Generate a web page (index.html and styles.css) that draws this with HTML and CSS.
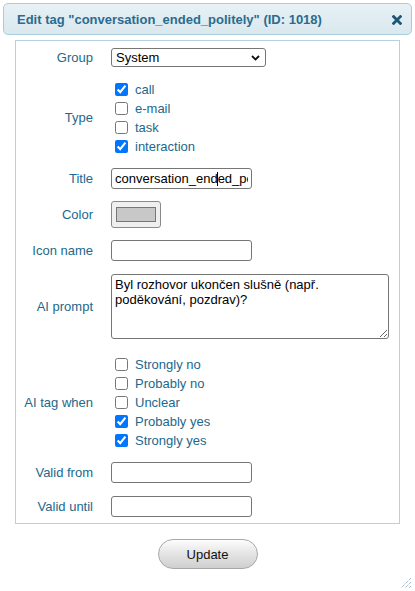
FILE: index.html
```html
<!DOCTYPE html>
<html>
<head>
<meta charset="utf-8">
<link rel="stylesheet" href="styles.css">
</head>
<body>
<div class="dialog">
  <div class="titlebar">
    <span class="title">Edit tag "conversation_ended_politely" (ID: 1018)</span>
    <svg class="close" width="10" height="10" viewBox="0 0 10 10"><path d="M1.6 1.6 L8.4 8.4 M8.4 1.6 L1.6 8.4" stroke="#1f5676" stroke-width="2.8" stroke-linecap="square"/></svg>
  </div>
  <div class="content">
    <div class="form">
      <div class="lbl">Group</div>
      <div class="field">
        <div class="select-wrap">
          <select class="select"><option>System</option></select>
          <svg class="chev" width="9" height="6" viewBox="0 0 9 6"><path d="M1 1 L4.5 4.5 L8 1" fill="none" stroke="#111" stroke-width="1.8"/></svg>
        </div>
      </div>

      <div class="lbl">Type</div>
      <div class="field checks mt1">
        <label class="check"><input type="checkbox" checked>call</label>
        <label class="check"><input type="checkbox">e-mail</label>
        <label class="check"><input type="checkbox">task</label>
        <label class="check"><input type="checkbox" checked>interaction</label>
      </div>

      <div class="lbl">Title</div>
      <div class="field"><div class="input-wrap"><input class="input" type="text" value="conversation_ended_politely"><span class="caret"></span></div></div>

      <div class="lbl">Color</div>
      <div class="field"><div class="color-btn"><div class="swatch"></div></div></div>

      <div class="lbl">Icon name</div>
      <div class="field"><input class="input" type="text"></div>

      <div class="lbl mt1">AI prompt</div>
      <div class="field mt1"><textarea class="area">Byl rozhovor ukončen slušně (např.
poděkování, pozdrav)?</textarea></div>

      <div class="lbl mt4">AI tag when</div>
      <div class="field checks mt4">
        <label class="check"><input type="checkbox">Strongly no</label>
        <label class="check"><input type="checkbox">Probably no</label>
        <label class="check"><input type="checkbox">Unclear</label>
        <label class="check"><input type="checkbox" checked>Probably yes</label>
        <label class="check"><input type="checkbox" checked>Strongly yes</label>
      </div>

      <div class="lbl">Valid from</div>
      <div class="field"><input class="input" type="text"></div>

      <div class="lbl mt1">Valid until</div>
      <div class="field mt1"><input class="input" type="text"></div>
    </div>
  </div>
  <div class="buttons"><button class="btn" type="button">Update</button></div>
  <svg class="grip" width="12" height="12" viewBox="0 0 12 12">
    <path d="M11 1 L1 11 M11 5 L5 11 M11 9 L9 11" stroke="#6f9bb3" stroke-width="1" stroke-dasharray="1 1"/>
  </svg>
</div>
</body>
</html>
```

FILE: styles.css
```css
* { box-sizing: border-box; }
html, body { margin: 0; padding: 0; background: #fff; }
body {
  font-family: "Liberation Sans", Arial, sans-serif;
  font-size: 13px;
  width: 415px;
  height: 591px;
  overflow: hidden;
}
.dialog {
  position: relative;
  height: 591px;
  padding: 3px;
}
.titlebar {
  height: 32px;
  border: 1px solid #aacbd9;
  border-radius: 5px;
  background: linear-gradient(#e7f1f6, #dae8ef);
  display: flex;
  align-items: center;
  justify-content: space-between;
  padding: 0 9px 0 13px;
}
.title {
  color: #2b6b8f;
  font-weight: bold;
  font-size: 13px;
  white-space: nowrap;
}
.close { display: block; margin-top: 1px; }
.content {
  margin: 5px 12px 0 12px;
  border: 1px solid #b5d3df;
  padding: 7px 0 6px 0;
}
.form {
  display: grid;
  grid-template-columns: 77px 1fr;
  column-gap: 18px;
  row-gap: 12px;
  align-items: center;
}
.mt1 { margin-top: 1px; }
.mt4 { margin-top: 4px; }
.lbl {
  text-align: right;
  color: #22688c;
  font-size: 13px;
  white-space: nowrap;
}
.field { display: flex; }
.select-wrap { position: relative; width: 155px; height: 19px; }
.select {
  -webkit-appearance: none;
  appearance: none;
  width: 155px;
  height: 19px;
  border: 1px solid #767676;
  border-radius: 3px;
  background: #fff;
  font-family: "Liberation Sans", Arial, sans-serif;
  font-size: 13px;
  color: #000;
  padding: 0 0 0 4px;
  margin: 0;
}
.chev { position: absolute; right: 6px; top: 7px; pointer-events: none; }
.checks { flex-direction: column; }
.check {
  display: flex;
  align-items: center;
  height: 19px;
  color: #22688c;
  font-size: 13px;
}
.check input {
  width: 13px;
  height: 13px;
  margin: 3px 7px 3px 4px;
}
.input {
  display: block;
  width: 141px;
  height: 21px;
  border: 1px solid #767676;
  border-radius: 3px;
  background: #fff;
  font-family: "Liberation Sans", Arial, sans-serif;
  font-size: 13px;
  color: #000;
  padding: 1px 3px;
  margin: 0;
}
.input-wrap { position: relative; }
.caret {
  position: absolute;
  left: 106px;
  top: 4px;
  width: 1px;
  height: 14px;
  background: #000;
}
.color-btn {
  width: 50px;
  height: 27px;
  border: 1px solid #8a8a8a;
  border-radius: 3px;
  background: #efefef;
  display: flex;
  align-items: center;
  justify-content: center;
}
.swatch {
  width: 40px;
  height: 15px;
  background: #c8c8c8;
  border: 1px solid #777;
}
.area {
  display: block;
  width: 278px;
  height: 65px;
  border: 1px solid #767676;
  border-radius: 3px;
  font-family: "Liberation Sans", Arial, sans-serif;
  font-size: 13px;
  line-height: 15px;
  padding: 2px 3px;
  margin: 0;
  color: #000;
  resize: both;
}
.buttons {
  display: flex;
  justify-content: center;
  padding-top: 15px;
}
.btn {
  width: 100px;
  height: 30px;
  border: 1px solid #a8a8a8;
  border-radius: 15px;
  background: linear-gradient(#fdfdfd, #e6e6e6 45%, #cfcfcf);
  font-family: "Liberation Sans", Arial, sans-serif;
  font-size: 13px;
  color: #111;
  padding: 0;
}
.grip { position: absolute; right: 3px; bottom: 2px; }
```
